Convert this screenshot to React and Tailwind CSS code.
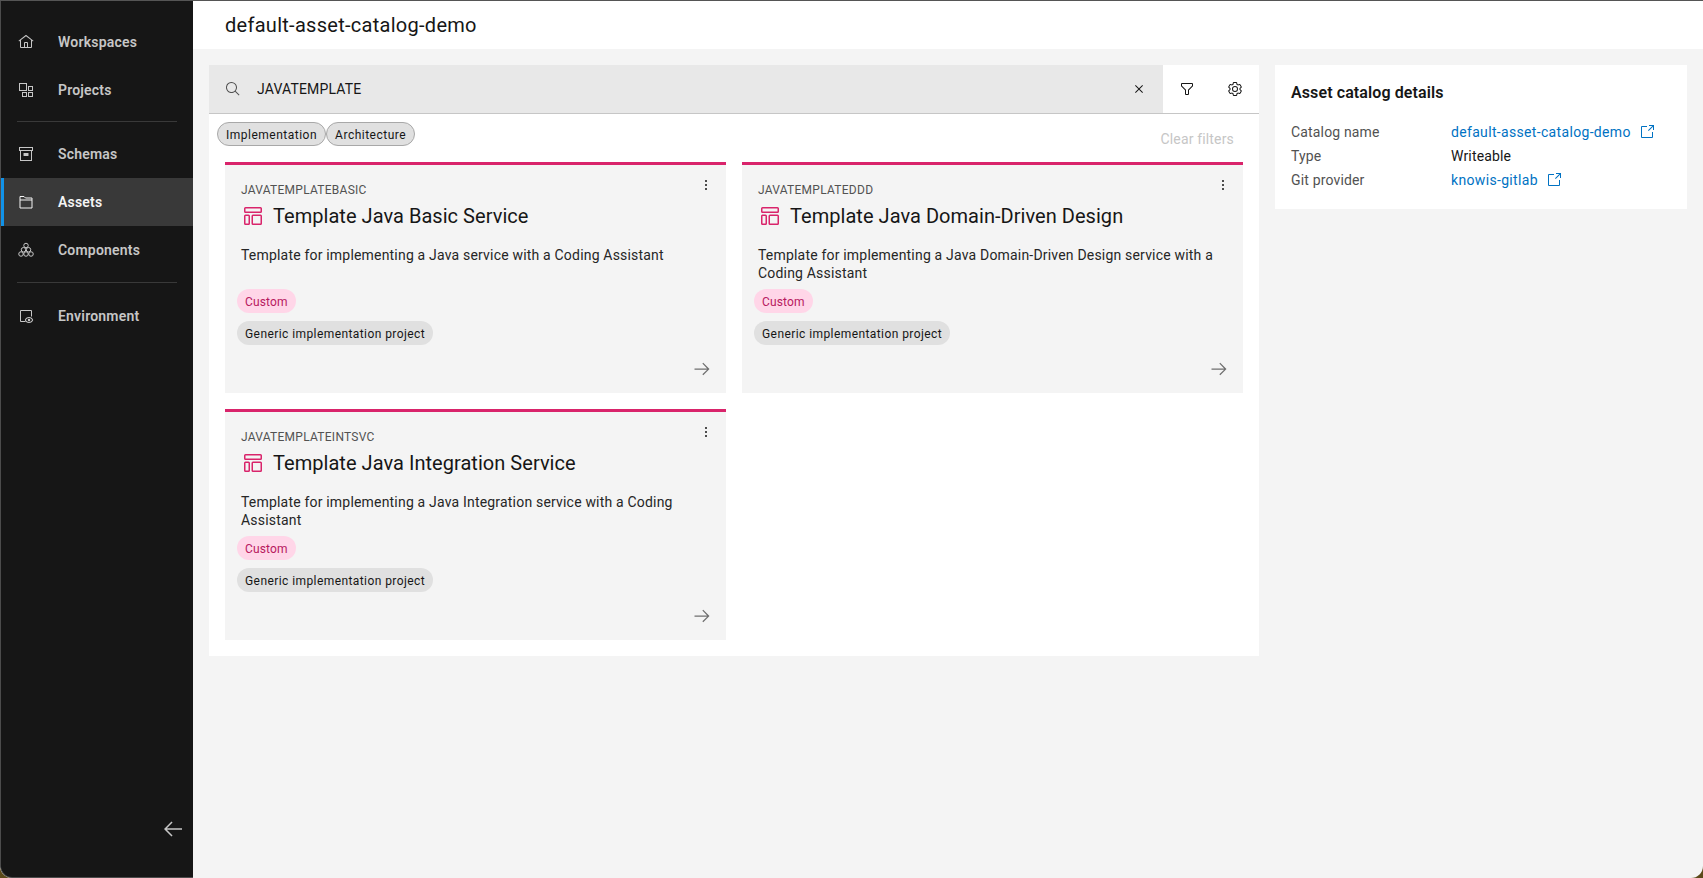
import React from "react";

const font = { fontFamily: "Roboto, sans-serif" };

/* Carbon-style icons, viewBox 32 */
const Icon = ({ size = 16, className = "", children }) => (
  <svg width={size} height={size} viewBox="0 0 32 32" fill="currentColor" className={`shrink-0 ${className}`}>
    {children}
  </svg>
);

const HomeIcon = () => (
  <Icon>
    <path d="M16.6123,2.2138a1.01,1.01,0,0,0-1.2427,0L1,13.4194l1.2427,1.5717L4,13.6209V26a2.0041,2.0041,0,0,0,2,2H26a2.0037,2.0037,0,0,0,2-2V13.63L29.7573,15,31,13.4282ZM18,26H14V18h4Zm2,0V18a2.0023,2.0023,0,0,0-2-2H14a2.002,2.002,0,0,0-2,2v8H6V12.0615l10-7.79,10,7.8015V26Z" />
  </Icon>
);

const ProjectsIcon = () => (
  <Icon>
    <g fill="none" stroke="currentColor" strokeWidth="2">
      <rect x="3" y="3" width="14" height="14" />
      <rect x="21" y="9" width="8" height="8" />
      <rect x="9" y="21" width="8" height="8" />
      <rect x="21" y="21" width="8" height="8" />
    </g>
  </Icon>
);

const SchemasIcon = () => (
  <Icon>
    <g fill="none" stroke="currentColor" strokeWidth="2">
      <rect x="3" y="3" width="26" height="6" />
      <rect x="5" y="9" width="22" height="20" />
    </g>
    <rect x="11" y="14" width="10" height="6" rx="1" />
  </Icon>
);

const AssetsIcon = () => (
  <Icon>
    <g fill="none" stroke="currentColor" strokeWidth="2">
      <path d="M4 12h24v16H4z" />
      <path d="M4 12V5h8l3 3h13v4" />
    </g>
  </Icon>
);

const ComponentsIcon = () => (
  <Icon>
    <g fill="none" stroke="currentColor" strokeWidth="2">
      <circle cx="16" cy="7" r="4.5" />
      <circle cx="11" cy="15.5" r="4.5" />
      <circle cx="21" cy="15.5" r="4.5" />
      <circle cx="6" cy="24" r="4.5" />
      <circle cx="16" cy="24" r="4.5" />
      <circle cx="26" cy="24" r="4.5" />
    </g>
  </Icon>
);

const EnvironmentIcon = () => (
  <Icon>
    <path d="M15 28H6a2 2 0 0 1-2-2V6a2 2 0 0 1 2-2h20a2 2 0 0 1 2 2v11h-2V6H6v20h9z" />
    <path d="M22 18c-4 0-7 2.4-8.4 6 1.4 3.6 4.4 6 8.4 6s7-2.4 8.4-6c-1.4-3.6-4.4-6-8.4-6zm0 10c-2.8 0-5-1.6-6.2-4 1.2-2.4 3.4-4 6.2-4s5 1.6 6.2 4c-1.2 2.4-3.4 4-6.2 4z" />
    <circle cx="22" cy="24" r="2.5" />
  </Icon>
);

const ArrowRight = ({ size = 16 }) => (
  <Icon size={size}>
    <path d="M18 6L16.57 7.393 24.15 15 4 15 4 17 24.15 17 16.57 24.573 18 26 28 16 18 6z" />
  </Icon>
);

const ArrowLeft = () => (
  <Icon size={24}>
    <path d="M14 26L15.41 24.59 7.83 17 28 17 28 15 7.83 15 15.41 7.41 14 6 4 16 14 26z" />
  </Icon>
);

const SearchIcon = () => (
  <Icon>
    <path d="M29,27.5859l-7.5521-7.5521a11.0177,11.0177,0,1,0-1.4141,1.4141L27.5859,29ZM4,13a9,9,0,1,1,9,9A9.01,9.01,0,0,1,4,13Z" />
  </Icon>
);

const CloseIcon = () => (
  <Icon>
    <path d="M24 9.4L22.6 8 16 14.6 9.4 8 8 9.4 14.6 16 8 22.6 9.4 24 16 17.4 22.6 24 24 22.6 17.4 16 24 9.4z" />
  </Icon>
);

const FilterIcon = () => (
  <Icon>
    <path d="M18,28H14a2,2,0,0,1-2-2V18.41L4.59,11A2,2,0,0,1,4,9.59V6A2,2,0,0,1,6,4H26a2,2,0,0,1,2,2V9.59A2,2,0,0,1,27.41,11L20,18.41V26A2,2,0,0,1,18,28ZM6,6V9.59l8,8V26h4V17.59l8-8V6Z" />
  </Icon>
);

const SettingsIcon = () => (
  <Icon>
    <path d="M27,16.76c0-.25,0-.5,0-.76s0-.51,0-.77l1.92-1.68A2,2,0,0,0,29.3,11L26.94,7a2,2,0,0,0-1.73-1,2,2,0,0,0-.64.1l-2.43.82a11.35,11.35,0,0,0-1.31-.75l-.51-2.52a2,2,0,0,0-2-1.61H13.64a2,2,0,0,0-2,1.61l-.51,2.52a11.48,11.48,0,0,0-1.32.75L7.43,6.06A2,2,0,0,0,6.79,6,2,2,0,0,0,5.06,7L2.7,11a2,2,0,0,0,.41,2.51L5,15.24c0,.25,0,.5,0,.76s0,.51,0,.77L3.11,18.45A2,2,0,0,0,2.7,21L5.06,25a2,2,0,0,0,1.73,1,2,2,0,0,0,.64-.1l2.43-.82a11.35,11.35,0,0,0,1.31.75l.51,2.52a2,2,0,0,0,2,1.61h4.72a2,2,0,0,0,2-1.61l.51-2.52a11.48,11.48,0,0,0,1.32-.75l2.42.82a2,2,0,0,0,.64.1,2,2,0,0,0,1.73-1L29.3,21a2,2,0,0,0-.41-2.51ZM25.21,24l-3.43-1.16a8.86,8.86,0,0,1-2.71,1.57L18.36,28H13.64l-.71-3.55a9.36,9.36,0,0,1-2.7-1.57L6.79,24,4.43,20l2.72-2.4a8.9,8.9,0,0,1,0-3.13L4.43,12,6.79,8l3.43,1.16a8.86,8.86,0,0,1,2.71-1.57L13.64,4h4.72l.71,3.55a9.36,9.36,0,0,1,2.7,1.57L25.21,8,27.57,12l-2.72,2.4a8.9,8.9,0,0,1,0,3.13L27.57,20Z" />
    <path d="M16,22a6,6,0,1,1,6-6A5.94,5.94,0,0,1,16,22Zm0-10a3.91,3.91,0,0,0-4,4,3.91,3.91,0,0,0,4,4,3.91,3.91,0,0,0,4-4A3.91,3.91,0,0,0,16,12Z" />
  </Icon>
);

const TemplateIcon = () => (
  <Icon size={24}>
    <path d="M26,6v4H6V6H26m0-2H6A2,2,0,0,0,4,6v4a2,2,0,0,0,2,2H26a2,2,0,0,0,2-2V6a2,2,0,0,0-2-2Z" />
    <path d="M10,16V26H6V16h4m0-2H6a2,2,0,0,0-2,2V26a2,2,0,0,0,2,2h4a2,2,0,0,0,2-2V16a2,2,0,0,0-2-2Z" />
    <path d="M26,16V26H16V16H26m0-2H16a2,2,0,0,0-2,2V26a2,2,0,0,0,2,2H26a2,2,0,0,0,2-2V16a2,2,0,0,0-2-2Z" />
  </Icon>
);

const OverflowIcon = () => (
  <Icon>
    <circle cx="16" cy="8" r="2" />
    <circle cx="16" cy="16" r="2" />
    <circle cx="16" cy="24" r="2" />
  </Icon>
);

const LaunchIcon = () => (
  <Icon>
    <path d="M26,28H6a2.0027,2.0027,0,0,1-2-2V6A2.0027,2.0027,0,0,1,6,4H16V6H6V26H26V16h2V26A2.0027,2.0027,0,0,1,26,28Z" />
    <path d="M20 2L20 4 26.586 4 18 12.586 19.414 14 28 5.414 28 12 30 12 30 2 20 2z" />
  </Icon>
);

const NavItem = ({ icon, label, active }) => (
  <div
    className={`relative flex h-12 items-center gap-[24px] pl-[17px] text-[14px] font-semibold tracking-[0.2px] ${
      active ? "bg-[#393939] text-[#f4f4f4]" : "text-[#c6c6c6]"
    }`}
  >
    {active && <span className="absolute left-0 top-0 h-full w-[3px] bg-[#1192e8]" />}
    {icon}
    <span>{label}</span>
  </div>
);

const Divider = ({ className = "" }) => <div className={`mx-[16px] h-px bg-[#393939] ${className}`} />;

const cards = [
  {
    id: "JAVATEMPLATEBASIC",
    title: "Template Java Basic Service",
    text: "Template for implementing a Java service with a Coding Assistant",
  },
  {
    id: "JAVATEMPLATEDDD",
    title: "Template Java Domain-Driven Design",
    text: "Template for implementing a Java Domain-Driven Design service with a Coding Assistant",
  },
  {
    id: "JAVATEMPLATEINTSVC",
    title: "Template Java Integration Service",
    text: "Template for implementing a Java Integration service with a Coding Assistant",
  },
];

const Card = ({ id, title, text }) => (
  <div className="relative flex h-[231px] flex-col border-t-[3px] border-[#d9246b] bg-[#f4f4f4] px-[16px] pb-[14px] pt-[17px]">
    <button className="absolute right-[12px] top-[12px] text-[#161616]">
      <OverflowIcon />
    </button>
    <div className="text-[12px] leading-[16px] tracking-[0.26px] text-[#525252]">{id}</div>
    <div className="mt-[4px] flex h-[28px] items-center gap-[8px]">
      <span className="text-[#d9246b]">
        <TemplateIcon />
      </span>
      <span className="text-[20px] leading-[28px] tracking-[0.04px] text-[#161616]">{title}</span>
    </div>
    <p className="mt-[16px] h-[36px] text-[14px] leading-[18px] tracking-[0.19px] text-[#262626]">{text}</p>
    <div className="-ml-[4px] mt-[7px] flex flex-col items-start gap-[8px]">
      <span className="flex h-6 items-center rounded-full bg-[#ffd6e8] px-[8px] pt-px text-[12px] tracking-[0.15px] text-[#b8195f]">
        Custom
      </span>
      <span className="flex h-6 items-center rounded-full bg-[#e0e0e0] px-[8px] pt-px text-[12px] tracking-[0.42px] text-[#161616]">
        Generic implementation project
      </span>
    </div>
    <div className="-mr-[2px] mt-auto flex justify-end text-[#6f6f6f]">
      <ArrowRight size={20} />
    </div>
  </div>
);

const FilterChip = ({ children }) => (
  <span className="flex h-6 items-center rounded-full border border-[#a8a8a8] bg-[#e0e0e0] px-[8px] pt-px text-[12px] tracking-[0.5px] text-[#161616]">
    {children}
  </span>
);

const Row = ({ label, children }) => (
  <div className="flex h-6 items-center text-[14px] tracking-[0.16px]">
    <span className="w-[160px] text-[#525252]">{label}</span>
    {children}
  </div>
);

const DetailLink = ({ children }) => (
  <span className="flex items-center gap-[8px] tracking-[0.33px] text-[#0072c3]">
    {children}
    <LaunchIcon />
  </span>
);

export default function App() {
  return (
    <div className="h-screen w-full bg-[#5c4a1a]" style={font}>
      <div className="flex h-full overflow-hidden rounded-b-[12px] border-t border-[#555555] bg-[#f4f4f4]">
        {/* Sidebar */}
        <aside className="flex w-[193px] shrink-0 flex-col rounded-bl-[12px] border-b border-l border-[#4c4c4c] bg-[#161616] pt-[17px]">
          <NavItem icon={<HomeIcon />} label="Workspaces" />
          <NavItem icon={<ProjectsIcon />} label="Projects" />
          <Divider className="mb-[8px] mt-[7px]" />
          <NavItem icon={<SchemasIcon />} label="Schemas" />
          <NavItem icon={<AssetsIcon />} label="Assets" active />
          <NavItem icon={<ComponentsIcon />} label="Components" />
          <Divider className="mb-[9px] mt-[8px]" />
          <NavItem icon={<EnvironmentIcon />} label="Environment" />
          <div className="mt-auto flex justify-end pb-[24px]">
            <button className="flex h-12 w-[44px] items-center justify-end pr-[8px] text-[#c6c6c6]">
              <ArrowLeft />
            </button>
          </div>
        </aside>

        {/* Main */}
        <main className="flex min-w-0 flex-1 flex-col">
          <header className="flex h-[48px] shrink-0 items-center bg-white pl-[32px] text-[20px] tracking-[0.28px] text-[#161616]">
            default-asset-catalog-demo
          </header>
          <div className="flex items-start gap-[16px] pl-[16px] pr-[16px] pt-[16px]">
            <section className="min-w-0 flex-1 bg-white pb-[16px]">
              <div className="flex h-[49px] border-b border-[#c6c6c6]">
                <div className="flex flex-1 items-center bg-[#e8e8e8] pl-[16px] text-[14px] tracking-[0.16px] text-[#161616]">
                  <span className="text-[#525252]">
                    <SearchIcon />
                  </span>
                  <span className="ml-[16px] flex-1 pt-px">JAVATEMPLATE</span>
                  <span className="flex h-12 w-12 items-center justify-center">
                    <CloseIcon />
                  </span>
                </div>
                <span className="flex h-12 w-12 items-center justify-center text-[#161616]">
                  <FilterIcon />
                </span>
                <span className="flex h-12 w-12 items-center justify-center text-[#161616]">
                  <SettingsIcon />
                </span>
              </div>
              <div className="mt-[8px] flex h-6 items-start justify-between pl-[8px] pr-[25px]">
                <div className="flex">
                  <FilterChip>Implementation</FilterChip>
                  <FilterChip>Architecture</FilterChip>
                </div>
                <span className="pt-[8px] text-[14px] leading-[18px] tracking-[0.16px] text-[#c6c6c6]">Clear filters</span>
              </div>
              <div className="mt-[16px] grid grid-cols-2 gap-[16px] pl-[16px] pr-[16px]">
                {cards.map((c) => (
                  <Card key={c.id} {...c} />
                ))}
              </div>
            </section>

            <section className="w-[412px] shrink-0 bg-white p-[16px] pb-[17px]">
              <h2 className="text-[16px] font-semibold leading-[24px] tracking-[0.1px] text-[#161616]">Asset catalog details</h2>
              <div className="mt-[15px]">
                <Row label="Catalog name">
                  <DetailLink>default-asset-catalog-demo</DetailLink>
                </Row>
                <Row label="Type">
                  <span className="text-[#161616]">Writeable</span>
                </Row>
                <Row label="Git provider">
                  <DetailLink>knowis-gitlab</DetailLink>
                </Row>
              </div>
            </section>
          </div>
        </main>
      </div>
    </div>
  );
}
